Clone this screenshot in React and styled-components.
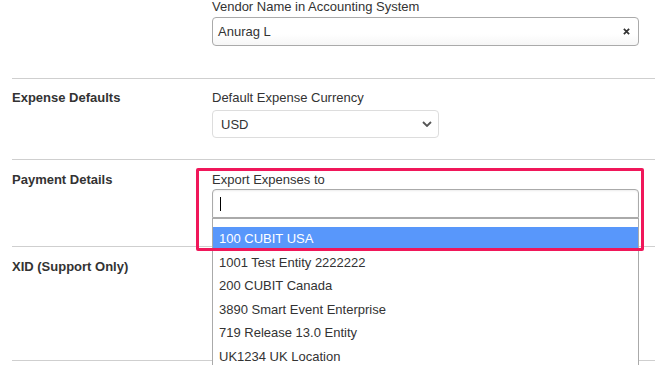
import styled, { createGlobalStyle } from 'styled-components';

const GlobalStyle = createGlobalStyle`
  body {
    margin: 0;
    background: #fff;
    font-family: "Liberation Sans", Arial, sans-serif;
    font-size: 13px;
    color: #333;
    overflow: hidden;
  }
`;

const entities = [
  '100 CUBIT USA',
  '1001 Test Entity 2222222',
  '200 CUBIT Canada',
  '3890 Smart Event Enterprise',
  '719 Release 13.0 Entity',
  'UK1234 UK Location',
];

const App = () => {
  return (
    <>
      <GlobalStyle />
      <Page>
        <Row $pt={0} $pb={32} $first>
          <SectionTitle />
          <Field>
            <FieldLabel $gap={1}>Vendor Name in Accounting System</FieldLabel>
            <ChosenBox>
              <span>Anurag L</span>
              <ClearIcon viewBox="0 0 8 8">
                <path d="M1 1 L7 7 M7 1 L1 7" />
              </ClearIcon>
            </ChosenBox>
          </Field>
        </Row>

        <Row $pt={10} $pb={21}>
          <SectionTitle>Expense Defaults</SectionTitle>
          <Field>
            <FieldLabel $gap={3}>Default Expense Currency</FieldLabel>
            <SelectBox>
              <span>USD</span>
              <Chevron viewBox="0 0 10 6">
                <path d="M1 1 L5 5 L9 1" />
              </Chevron>
            </SelectBox>
          </Field>
        </Row>

        <Row $pt={11} $pb={28}>
          <SectionTitle>Payment Details</SectionTitle>
          <Field>
            <FieldLabel $gap={0}>Export Expenses to</FieldLabel>
            <Combo>
              <SearchBox>
                <Caret />
              </SearchBox>
              <Dropdown>
                {entities.map((name, i) => (
                  <Option key={name} $active={i === 0}>
                    {name}
                  </Option>
                ))}
              </Dropdown>
            </Combo>
            <Highlight />
          </Field>
        </Row>

        <Row $pt={11} $pb={84}>
          <SectionTitle>XID (Support Only)</SectionTitle>
          <Field />
        </Row>

        <Row $pt={4} $pb={0} />
      </Page>
    </>
  );
};

const Page = styled.div`
  padding-left: 12px;
  margin-top: -2px;
`;

const Row = styled.section`
  display: grid;
  grid-template-columns: 200px 427px;
  padding-top: ${(p) => p.$pt}px;
  padding-bottom: ${(p) => p.$pb}px;
  border-top: ${(p) => (p.$first ? 'none' : '1px solid #cfcfcf')};
`;

const SectionTitle = styled.div`
  font-weight: bold;
  line-height: 18px;
  color: #333;
`;

const Field = styled.div`
  position: relative;
`;

const FieldLabel = styled.div`
  line-height: 18px;
  margin-bottom: ${(p) => p.$gap}px;
  color: #333;
`;

const ChosenBox = styled.div`
  box-sizing: border-box;
  height: 29px;
  border: 1px solid #aaa;
  border-radius: 4px;
  background: linear-gradient(#fff 60%, #f6f6f6);
  display: flex;
  align-items: center;
  justify-content: space-between;
  padding: 0 8px 0 5px;
  color: #333;
`;

const ClearIcon = styled.svg`
  width: 7px;
  height: 7px;
  stroke: #333;
  stroke-width: 2;
  fill: none;
`;

const SelectBox = styled.div`
  box-sizing: border-box;
  width: 227px;
  height: 28px;
  border: 1px solid #ddd;
  border-radius: 4px;
  display: flex;
  align-items: center;
  justify-content: space-between;
  padding: 0 6px 0 8px;
  color: #333;
`;

const Chevron = styled.svg`
  width: 10px;
  height: 6px;
  stroke: #555;
  stroke-width: 1.8;
  fill: none;
`;

const Combo = styled.div`
  position: relative;
`;

const SearchBox = styled.div`
  box-sizing: border-box;
  height: 29px;
  border: 1px solid #aaa;
  border-radius: 4px 4px 0 0;
  box-shadow: inset 0 1px 2px rgba(0, 0, 0, 0.08);
  display: flex;
  align-items: center;
  padding-left: 7px;
`;

const Caret = styled.span`
  display: block;
  width: 1px;
  height: 14px;
  background: #000;
`;

const Dropdown = styled.ul`
  position: absolute;
  top: 29px;
  left: 0;
  right: 0;
  z-index: 2;
  margin: 0;
  list-style: none;
  box-sizing: border-box;
  padding: 8px 0 0;
  background: #fff;
  border: 1px solid #aaa;
  border-bottom: none;
  height: 147px;
  overflow: hidden;
`;

const Option = styled.li`
  padding: 3px 6px;
  line-height: 17.5px;
  background: ${(p) => (p.$active ? '#5897fb' : 'transparent')};
  color: ${(p) => (p.$active ? '#fff' : '#333')};
`;

const Highlight = styled.div`
  position: absolute;
  left: -16px;
  top: -3px;
  width: 448px;
  height: 83px;
  box-sizing: border-box;
  border: 3px solid #f0175a;
  border-radius: 2px;
  z-index: 3;
  pointer-events: none;
`;

export default App;
